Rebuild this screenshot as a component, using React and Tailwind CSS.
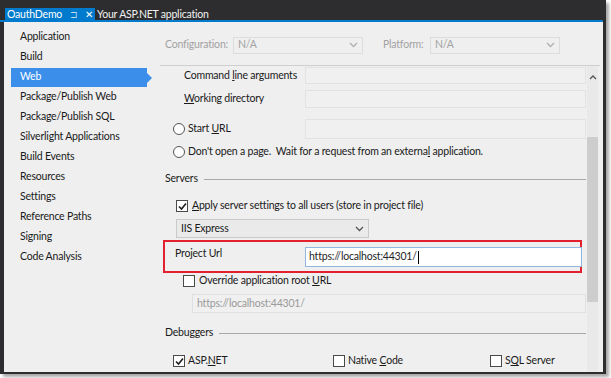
import React from "react";

const font = { fontFamily: 'Lato, "Noto Sans", sans-serif' };

function Check({ checked }) {
  return (
    <span className="w-[12px] h-[12px] border border-[#4a4a4a] bg-white flex items-center justify-center shrink-0">
      {checked && (
        <svg width="9" height="9" viewBox="0 0 9 9">
          <path d="M1 4.5 L3.5 7 L8 1.5" stroke="#1e1e1e" strokeWidth="1.6" fill="none" />
        </svg>
      )}
    </span>
  );
}

function Radio() {
  return <span className="w-[12px] h-[12px] rounded-full border border-[#555] bg-white shrink-0" />;
}

function Chevron({ color = "#555" }) {
  return (
    <svg width="9" height="6" viewBox="0 0 9 6">
      <path d="M1 1 L4.5 4.5 L8 1" stroke={color} strokeWidth="1.3" fill="none" />
    </svg>
  );
}

const navItems = [
  "Application",
  "Build",
  "Web",
  "Package/Publish Web",
  "Package/Publish SQL",
  "Silverlight Applications",
  "Build Events",
  "Resources",
  "Settings",
  "Reference Paths",
  "Signing",
  "Code Analysis",
];

export default function App() {
  return (
    <div className="w-[611px] h-[378px] bg-white whitespace-nowrap tracking-[-0.2px]" style={font}>
      <div className="w-[606px] h-[374px] bg-[#2d2d30] flex flex-col shadow-[3px_3px_3px_rgba(0,0,0,0.35)]">
        {/* title / tab bar */}
        <div className="h-[20px] flex items-end pl-[5px] text-[10.5px]">
          <div className="h-[12px] bg-[#007acc] text-white flex items-center pl-[2px] w-[90px] shrink-0 overflow-hidden leading-none">
            <span>OauthDemo</span>
            <span className="ml-[8px] text-[9px] text-[#bcdcf2]">⊐</span>
            <span className="ml-[7px] text-[10px]">✕</span>
          </div>
          <div className="h-[12px] flex items-center pl-[2px] text-[#f1f1f1] leading-none">Your ASP.NET application</div>
        </div>
        <div className="h-[2px] bg-[#007acc] mr-[3px]" />
        {/* body */}
        <div className="flex-1 flex ml-[4px] mr-[3px] mb-[2px] bg-[#efefef] text-[10.5px] text-[#1a1a1a]">
          {/* nav */}
          <div className="w-[148px] pt-[5px] flex flex-col">
            {navItems.map((n) =>
              n === "Web" ? (
                <div key={n} className="h-[20px] flex items-center pl-[7px]">
                  <div className="relative h-[19px] w-[136px] bg-[#3b8fea] text-white flex items-center pl-[9px]">
                    Web
                    <div className="absolute right-[-5px] top-[5px] w-0 h-0 border-t-[5px] border-b-[5px] border-l-[5px] border-t-transparent border-b-transparent border-l-[#3b8fea]" />
                  </div>
                </div>
              ) : (
                <div key={n} className="h-[20px] flex items-center pl-[16px]">
                  {n}
                </div>
              )
            )}
          </div>
          {/* right */}
          <div className="flex-1 flex flex-col">
            <div className="h-[44px] flex items-center pt-[3px] border-b border-[#cfcfcf] ml-[8px] mr-[3px] text-[#a2a2a2]">
              <span className="w-[73px] pl-[5px]">Configuration:</span>
              <div className="w-[130px] h-[17px] border border-[#dcdcdc] flex items-center justify-between px-[4px]">
                <span>N/A</span>
                <Chevron color="#b0b0b0" />
              </div>
              <span className="ml-[20px] w-[47px]">Platform:</span>
              <div className="w-[130px] h-[17px] border border-[#dcdcdc] flex items-center justify-between px-[4px]">
                <span>N/A</span>
                <Chevron color="#b0b0b0" />
              </div>
            </div>
            <div className="flex-1 flex">
              <div className="flex-1 flex flex-col pl-[8px] pr-[1px] pt-[1px]">
                {/* command line */}
                <div className="h-[17px] flex items-center">
                  <span className="w-[145px] pl-[24px]">Command <u>l</u>ine arguments</span>
                  <div className="flex-1 h-full border border-[#e2e2e2] bg-[#f0f0f0]" />
                </div>
                <div className="h-[18px] mt-[6px] flex items-center">
                  <span className="w-[145px] pl-[24px]"><u>W</u>orking directory</span>
                  <div className="flex-1 h-full border border-[#e2e2e2] bg-[#f0f0f0]" />
                </div>
                <div className="h-[20px] mt-[11px] flex items-center">
                  <div className="w-[145px] pl-[13px] flex items-center gap-[3px]">
                    <Radio />
                    <span>Start <u>U</u>RL</span>
                  </div>
                  <div className="flex-1 h-full border border-[#e2e2e2] bg-[#f0f0f0]" />
                </div>
                <div className="h-[18px] mt-[4px] flex items-center pl-[13px] gap-[3px]">
                  <Radio />
                  <span>Don't open a page.&nbsp; Wait for a request from an externa<u>l</u> application.</span>
                </div>
                {/* Servers */}
                <div className="h-[18px] mt-[9px] flex items-center pl-[5px] gap-[6px]">
                  <span>Servers</span>
                  <div className="flex-1 h-px bg-[#a8a8a8]" />
                </div>
                <div className="h-[18px] mt-[9px] flex items-center pl-[16px] gap-[4px]">
                  <Check checked />
                  <span><u>A</u>pply server settings to all users (store in project file)</span>
                </div>
                <div className="h-[19px] mt-[4px] ml-[16px] w-[193px] border border-[#c9c9c9] bg-[#eaeaea] flex items-center justify-between px-[4px]">
                  <span>IIS Express</span>
                  <Chevron />
                </div>
                {/* Project Url boxed */}
                <div className="h-[33px] mt-[2px] ml-[3px] w-[419px] border-2 border-[#e3202e] relative">
                  <span className="absolute left-[10px] top-[4px]">Pro<u>j</u>ect Url</span>
                  <div className="absolute left-[140px] top-[5px] w-[277px] h-[20px] bg-white border border-[#8fb5e0] flex items-center pl-[3px] text-[#1e1e1e]">
                    https://localhost:44301/<span className="w-px h-[13px] bg-black ml-[1px]" />
                  </div>
                </div>
                <div className="h-[16px] flex items-center pl-[23px] gap-[4px]">
                  <Check />
                  <span>Override application root <u>U</u>RL</span>
                </div>
                <div className="h-[19px] mt-[5px] ml-[32px] border border-[#e0e0e0] bg-[#f0f0f0] flex items-center pl-[4px] text-[#9a9a9a]">
                  https://localhost:44301/
                </div>
                {/* Debuggers */}
                <div className="h-[18px] mt-[11px] flex items-center pl-[5px] gap-[6px]">
                  <span>Debuggers</span>
                  <div className="flex-1 h-px bg-[#a8a8a8]" />
                </div>
                <div className="h-[18px] mt-[10px] flex items-center pl-[13px]">
                  <div className="w-[160px] flex items-center gap-[3px]">
                    <Check checked />
                    <span>ASP.<u>N</u>ET</span>
                  </div>
                  <div className="w-[157px] flex items-center gap-[3px]">
                    <Check />
                    <span>Native <u>C</u>ode</span>
                  </div>
                  <div className="flex items-center gap-[3px]">
                    <Check />
                    <span>S<u>Q</u>L Server</span>
                  </div>
                </div>
              </div>
              {/* scrollbar */}
              <div className="w-[11px] mr-[5px] bg-[#e9e9e9] flex flex-col items-center">
                <div className="h-[22px] flex items-center">
                  <svg width="8" height="5" viewBox="0 0 8 5">
                    <path d="M1 4 L4 1 L7 4" stroke="#555" strokeWidth="1.3" fill="none" />
                  </svg>
                </div>
                <div className="mt-[49px] w-full h-[165px] bg-[#cdcdcd]" />
              </div>
            </div>
          </div>
        </div>
      </div>
    </div>
  );
}
